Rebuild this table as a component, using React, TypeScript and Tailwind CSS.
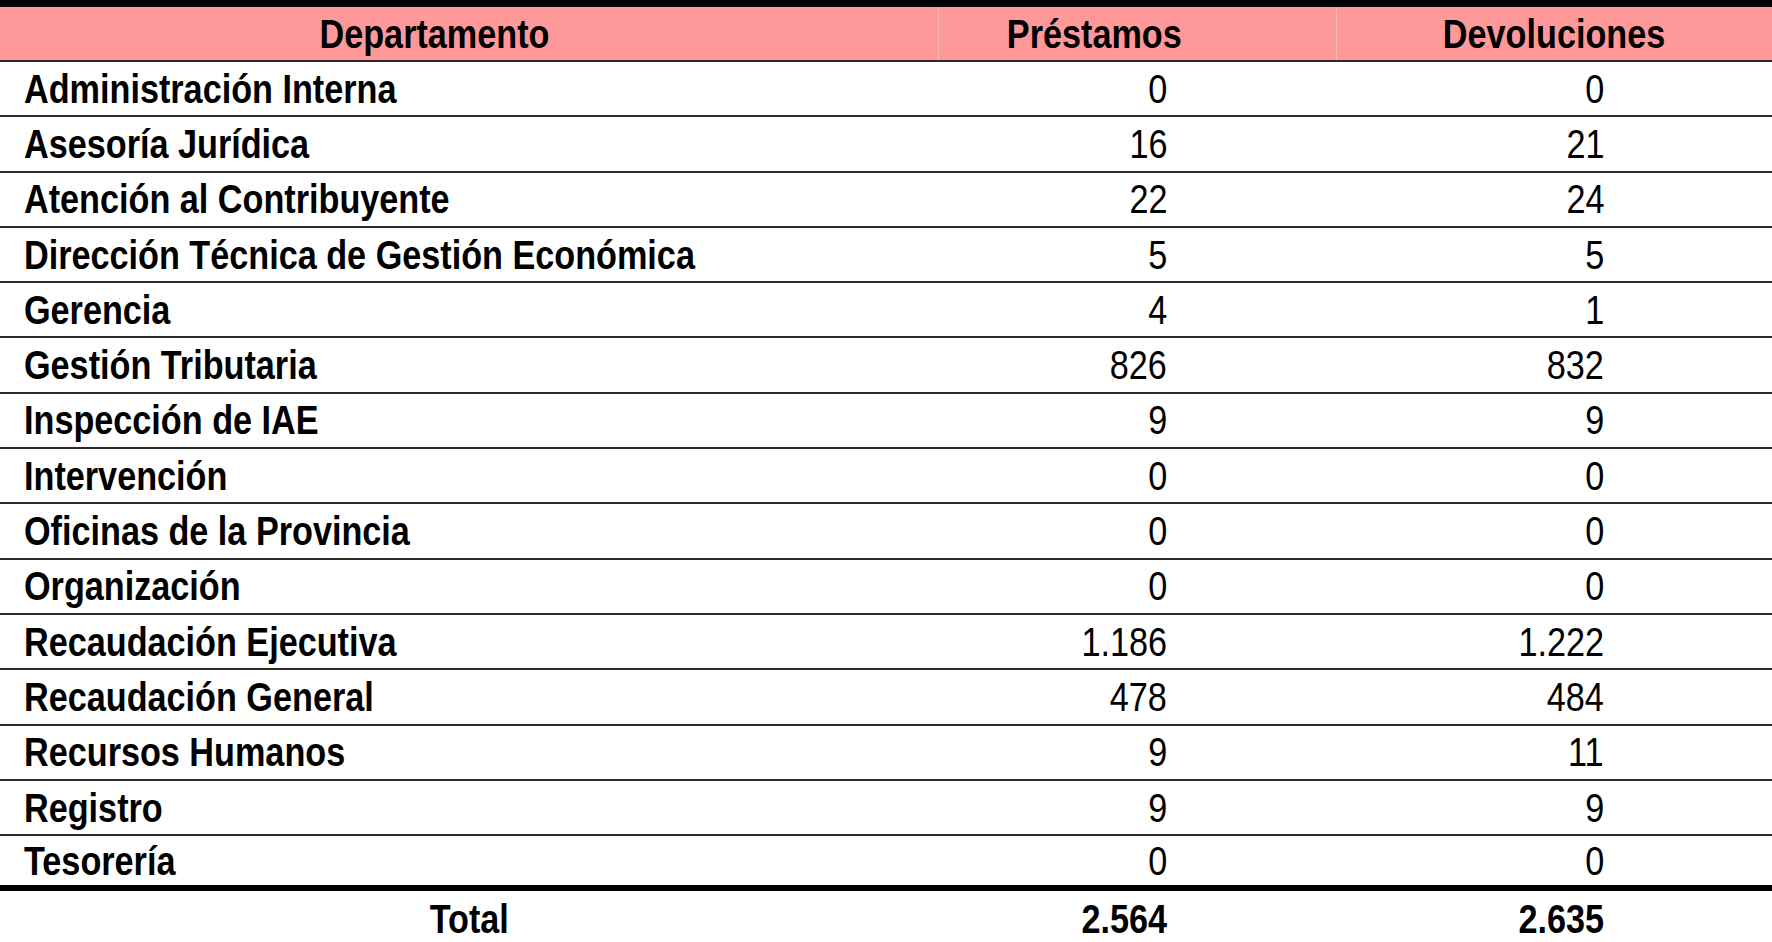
import React from 'react';

const rows: [string, string, string][] = [
  ['Administración Interna', '0', '0'],
  ['Asesoría Jurídica', '16', '21'],
  ['Atención al Contribuyente', '22', '24'],
  ['Dirección Técnica de Gestión Económica', '5', '5'],
  ['Gerencia', '4', '1'],
  ['Gestión Tributaria', '826', '832'],
  ['Inspección de IAE', '9', '9'],
  ['Intervención', '0', '0'],
  ['Oficinas de la Provincia', '0', '0'],
  ['Organización', '0', '0'],
  ['Recaudación Ejecutiva', '1.186', '1.222'],
  ['Recaudación General', '478', '484'],
  ['Recursos Humanos', '9', '11'],
  ['Registro', '9', '9'],
  ['Tesorería', '0', '0'],
];

// Liberation Sans squeezed to mimic Arial Narrow
const Narrow: React.FC<{ children: React.ReactNode; origin: 'left' | 'right' | 'center' }> = ({ children, origin }) => (
  <span
    className={`inline-block whitespace-nowrap scale-x-[0.855] ${
      origin === 'left' ? 'origin-left' : origin === 'right' ? 'origin-right' : 'origin-center'
    }`}
  >
    {children}
  </span>
);

const App: React.FC = () => {
  return (
    <div
      className="w-[1772px] h-[942px] overflow-hidden bg-white text-black text-[40px] leading-none"
      style={{ fontFamily: '"Liberation Sans", Arial, sans-serif' }}
    >
      {/* Header */}
      <div className="border-t-[7px] border-b-2 border-t-black border-b-[#2b2b2b] bg-[#ff9999] grid grid-cols-[938px_398px_436px] h-[62px] font-bold">
        <div className="flex items-center justify-center pr-[70px]">
          <Narrow origin="center">Departamento</Narrow>
        </div>
        <div className="flex items-center justify-center pr-[86px] border-l border-[#f7b9b9]">
          <Narrow origin="center">Préstamos</Narrow>
        </div>
        <div className="flex items-center justify-center border-l border-[#f7b9b9]">
          <Narrow origin="center">Devoluciones</Narrow>
        </div>
      </div>

      {/* Body */}
      {rows.map(([name, p, d], i) => (
        <div
          key={name}
          className={`grid grid-cols-[938px_398px_436px] h-[55.3px] ${
            i === rows.length - 1 ? 'border-b-[6px] border-black' : 'border-b-2 border-[#2b2b2b]'
          }`}
        >
          <div className="flex items-center pl-[24px] font-bold">
            <Narrow origin="left">{name}</Narrow>
          </div>
          <div className="flex items-center justify-end pr-[169px]">
            <Narrow origin="right">{p}</Narrow>
          </div>
          <div className="flex items-center justify-end pr-[168px]">
            <Narrow origin="right">{d}</Narrow>
          </div>
        </div>
      ))}

      {/* Total */}
      <div className="grid grid-cols-[938px_398px_436px] h-[55px] font-bold">
        <div className="flex items-center justify-center">
          <Narrow origin="center">Total</Narrow>
        </div>
        <div className="flex items-center justify-end pr-[169px]">
          <Narrow origin="right">2.564</Narrow>
        </div>
        <div className="flex items-center justify-end pr-[168px]">
          <Narrow origin="right">2.635</Narrow>
        </div>
      </div>
    </div>
  );
};

export default App;
